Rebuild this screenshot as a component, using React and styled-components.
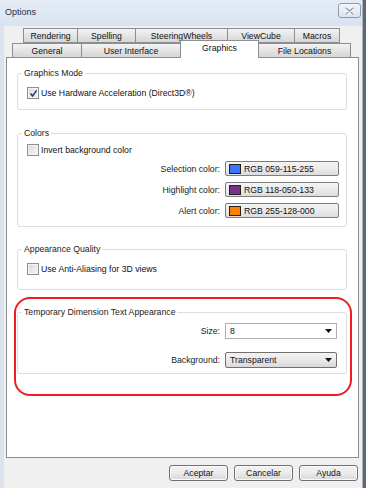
import React from 'react';
import styled, { createGlobalStyle } from 'styled-components';

const GlobalStyle = createGlobalStyle`
  html, body {
    margin: 0;
    padding: 0;
    background: #5f6770;
  }
  body {
    font-family: "Liberation Sans", Arial, sans-serif;
    font-size: 8.7px;
    color: #111;
  }
`;

const rowOneTabs = [
  { label: 'Rendering', width: 55 },
  { label: 'Spelling', width: 59 },
  { label: 'SteeringWheels', width: 93 },
  { label: 'ViewCube', width: 68 },
  { label: 'Macros', width: 46 },
];

const rowTwoTabs = [
  { label: 'General', width: 70 },
  { label: 'User Interface', width: 100 },
  { label: 'Graphics', width: 79, active: true },
  { label: 'File Locations', width: 93 },
];

const colorRows = [
  { label: 'Selection color:', swatch: 'rgb(59,115,255)', value: 'RGB 059-115-255' },
  { label: 'Highlight color:', swatch: 'rgb(118,50,133)', value: 'RGB 118-050-133' },
  { label: 'Alert color:', swatch: 'rgb(255,128,0)', value: 'RGB 255-128-000' },
];

function Check({ checked, children }) {
  return (
    <CheckRow>
      <CheckBox>
        {checked && (
          <svg width="9" height="9" viewBox="0 0 9 9">
            <path d="M1.5 4.6 L3.6 7 L7.6 1.4" fill="none" stroke="#23366e" strokeWidth="1.5" />
          </svg>
        )}
      </CheckBox>
      <span>{children}</span>
    </CheckRow>
  );
}

function Arrow() {
  return (
    <svg width="7" height="4" viewBox="0 0 7 4">
      <path d="M0 0 H7 L3.5 4 Z" fill="#111" />
    </svg>
  );
}

function App() {
  return (
    <Window>
      <GlobalStyle />
      <TitleBar>
        <Title>Options</Title>
        <CloseButton>
          <svg width="9" height="8" viewBox="0 0 9 8">
            <path d="M1 1 L8 7 M8 1 L1 7" stroke="#fff" strokeWidth="3" strokeLinecap="round" />
            <path d="M1 1 L8 7 M8 1 L1 7" stroke="#8d99a6" strokeWidth="1.4" strokeLinecap="round" />
          </svg>
        </CloseButton>
      </TitleBar>

      <Client>
        <TabStrip>
          <TabRow indent={18}>
            {rowOneTabs.map(t => (
              <Tab key={t.label} w={t.width}>{t.label}</Tab>
            ))}
          </TabRow>
          <TabRow indent={7}>
            {rowTwoTabs.map(t => (
              <Tab key={t.label} w={t.width} active={t.active}>{t.label}</Tab>
            ))}
          </TabRow>
        </TabStrip>

        <Panel>
          <Group>
            <Legend>Graphics Mode</Legend>
            <GroupBody pt={8} pb={10}>
              <Check checked>Use Hardware Acceleration (Direct3D®)</Check>
            </GroupBody>
          </Group>

          <Group gap={18}>
            <Legend>Colors</Legend>
            <GroupBody pt={5} pb={8}>
              <Check>Invert background color</Check>
              <ColorList>
                {colorRows.map(r => (
                  <FieldRow key={r.label} pr={7}>
                    <FieldLabel>{r.label}</FieldLabel>
                    <ColorButton>
                      <Swatch color={r.swatch} />
                      {r.value}
                    </ColorButton>
                  </FieldRow>
                ))}
              </ColorList>
            </GroupBody>
          </Group>

          <Group gap={17}>
            <Legend>Appearance Quality</Legend>
            <GroupBody pt={8} pb={14}>
              <Check>Use Anti-Aliasing for 3D views</Check>
            </GroupBody>
          </Group>

          <Highlight>
            <Group>
              <Legend>Temporary Dimension Text Appearance</Legend>
              <GroupBody pt={5} pb={5}>
                <FieldRow pr={9}>
                  <FieldLabel>Size:</FieldLabel>
                  <Combo>
                    <span>8</span>
                    <Arrow />
                  </Combo>
                </FieldRow>
                <FieldRow pr={9} top={13}>
                  <FieldLabel>Background:</FieldLabel>
                  <Combo list>
                    <span>Transparent</span>
                    <Arrow />
                  </Combo>
                </FieldRow>
              </GroupBody>
            </Group>
          </Highlight>
        </Panel>

        <ButtonBar>
          <DialogButton>Aceptar</DialogButton>
          <DialogButton>Cancelar</DialogButton>
          <DialogButton>Ayuda</DialogButton>
        </ButtonBar>
      </Client>
    </Window>
  );
}

export default App;

const Window = styled.div`
  width: 363px;
  height: 488px;
  background: #dbe4ee;
  border-right: 1px solid #a7b3c0;
  display: flex;
  flex-direction: column;
  box-sizing: border-box;
`;

const TitleBar = styled.div`
  height: 26px;
  display: flex;
  align-items: flex-start;
  justify-content: space-between;
  padding: 0 1px 0 5px;
  background: linear-gradient(#e4ecf6, #d9e3ef);
`;

const Title = styled.div`
  margin-top: 7px;
  font-size: 9px;
  color: #1e2f45;
`;

const CloseButton = styled.div`
  margin-top: 3px;
  width: 23px;
  height: 15px;
  box-sizing: border-box;
  border: 1px solid #8e9cae;
  border-radius: 3px;
  background: linear-gradient(#f1f5fa, #dae3ee);
  display: flex;
  align-items: center;
  justify-content: center;
`;

const Client = styled.div`
  flex: 1;
  margin-left: 4px;
  padding: 2px 3px 0 2px;
  background: #f0f0f0;
  display: flex;
  flex-direction: column;
`;

const TabStrip = styled.div`
  display: flex;
  flex-direction: column;
`;

const TabRow = styled.div`
  display: flex;
  margin-left: ${p => p.indent}px;
  height: ${p => (p.indent === 7 ? 14 : 15)}px;
`;

const Tab = styled.div`
  width: ${p => p.w}px;
  box-sizing: border-box;
  height: ${p => (p.active ? 18 : 15)}px;
  margin-top: ${p => (p.active ? -3 : 0)}px;
  border: 1px solid #8a8d94;
  border-bottom: ${p => (p.active ? 'none' : '1px solid #8a8d94')};
  margin-left: -1px;
  background: ${p => (p.active ? '#fff' : 'linear-gradient(#f3f3f3, #e4e4e4 50%, #d6d6d6)')};
  position: relative;
  z-index: ${p => (p.active ? 2 : 0)};
  display: flex;
  align-items: ${p => (p.active ? 'flex-start' : 'center')};
  padding-top: ${p => (p.active ? 2 : 0)}px;
  justify-content: center;
  white-space: nowrap;
`;

const Panel = styled.div`
  height: 401px;
  box-sizing: border-box;
  background: #fff;
  border: 1px solid #8a8d94;
  padding: 10px 11px 0 10px;
  display: flex;
  flex-direction: column;
`;

const Group = styled.fieldset`
  margin: ${p => p.gap || 0}px 0 0 0;
  min-width: 0;
  padding: 0 0 0 4px;
  border: 1px solid #d5dfe5;
  border-radius: 3px;
`;

const Legend = styled.legend`
  padding: 0 2px;
  line-height: 11px;
  color: #1a1a1a;
`;

const GroupBody = styled.div`
  padding-top: ${p => p.pt}px;
  padding-bottom: ${p => p.pb}px;
  display: flex;
  flex-direction: column;
`;

const CheckRow = styled.div`
  display: flex;
  align-items: center;
  gap: 2px;
  height: 12px;
  margin-left: 5px;
`;

const CheckBox = styled.span`
  width: 12px;
  height: 12px;
  box-sizing: border-box;
  border: 1px solid #8e8f8f;
  background: linear-gradient(135deg, #d9d9d9, #f7f7f7);
  box-shadow: inset 0 0 0 1px #f4f4f4;
  display: flex;
  align-items: center;
  justify-content: center;
`;

const ColorList = styled.div`
  margin-top: 5px;
  display: flex;
  flex-direction: column;
  gap: 6px;
`;

const FieldRow = styled.div`
  display: flex;
  align-items: center;
  justify-content: flex-end;
  gap: 5px;
  padding-right: ${p => p.pr}px;
  margin-top: ${p => p.top || 0}px;
`;

const FieldLabel = styled.span`
  color: #1a1a1a;
`;

const ColorButton = styled.div`
  width: 114px;
  height: 15px;
  box-sizing: border-box;
  border: 1px solid #7d7d7d;
  border-radius: 2px;
  background: linear-gradient(#f4f4f4, #ebebeb 50%, #dcdcdc);
  display: flex;
  align-items: center;
  gap: 3px;
  padding-left: 3px;
`;

const Swatch = styled.span`
  width: 12px;
  height: 10px;
  box-sizing: border-box;
  border: 1px solid #222;
  background: ${p => p.color};
`;

const Combo = styled.div`
  width: 112px;
  height: 16px;
  box-sizing: border-box;
  border: 1px solid ${p => (p.list ? '#707070' : '#abadb3')};
  border-radius: ${p => (p.list ? 2 : 0)}px;
  background: ${p => (p.list ? 'linear-gradient(#f3f3f3, #e9e9e9 50%, #d9d9d9)' : '#fff')};
  display: flex;
  align-items: center;
  justify-content: space-between;
  padding: 0 4px 0 4px;
`;

const Highlight = styled.div`
  margin: 7px -5px 0 -3px;
  border: 2px solid #ee1c25;
  border-radius: 16px;
  padding: 8px 3px 20px 1px;
`;

const ButtonBar = styled.div`
  display: flex;
  justify-content: flex-end;
  gap: 6px;
  margin-top: 7px;
  padding-right: 1px;
`;

const DialogButton = styled.div`
  width: 59px;
  height: 16px;
  box-sizing: border-box;
  border: 1px solid #707070;
  border-radius: 3px;
  background: linear-gradient(#f2f2f2, #ebebeb 50%, #d7d7d7);
  box-shadow: inset 0 0 0 1px #fbfbfb;
  display: flex;
  align-items: center;
  justify-content: center;
`;
